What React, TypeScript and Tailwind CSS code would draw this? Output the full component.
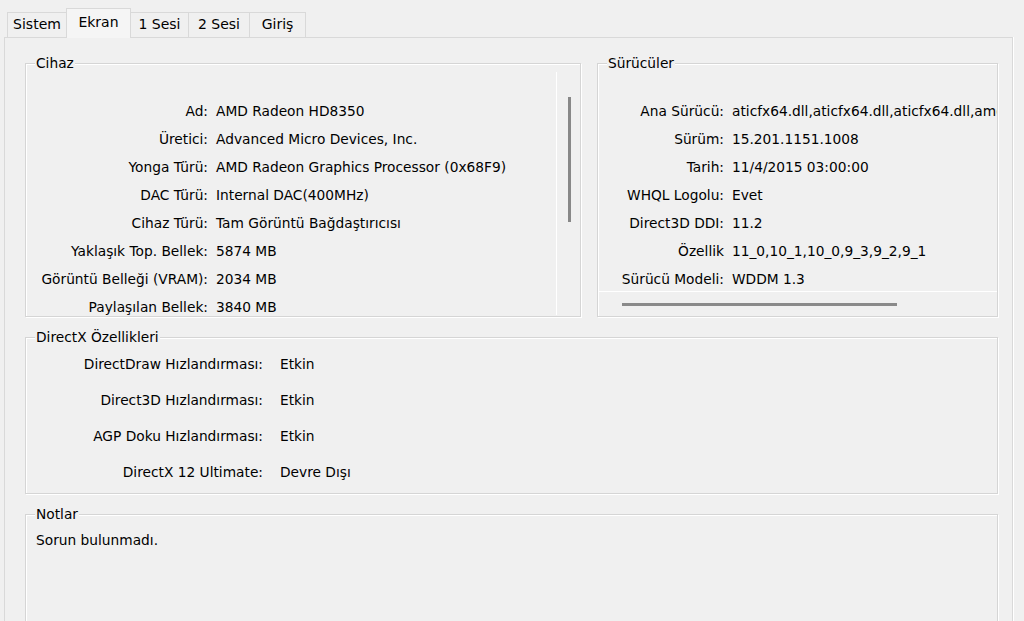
import type { ReactNode } from "react";

const device: [string, string][] = [
  ["Ad:", "AMD Radeon HD8350"],
  ["Üretici:", "Advanced Micro Devices, Inc."],
  ["Yonga Türü:", "AMD Radeon Graphics Processor (0x68F9)"],
  ["DAC Türü:", "Internal DAC(400MHz)"],
  ["Cihaz Türü:", "Tam Görüntü Bağdaştırıcısı"],
  ["Yaklaşık Top. Bellek:", "5874 MB"],
  ["Görüntü Belleği (VRAM):", "2034 MB"],
  ["Paylaşılan Bellek:", "3840 MB"],
];

const drivers: [string, string][] = [
  ["Ana Sürücü:", "aticfx64.dll,aticfx64.dll,aticfx64.dll,amdxc64.dll"],
  ["Sürüm:", "15.201.1151.1008"],
  ["Tarih:", "11/4/2015 03:00:00"],
  ["WHQL Logolu:", "Evet"],
  ["Direct3D DDI:", "11.2"],
  ["Özellik", "11_0,10_1,10_0,9_3,9_2,9_1"],
  ["Sürücü Modeli:", "WDDM 1.3"],
];

const features: [string, string][] = [
  ["DirectDraw Hızlandırması:", "Etkin"],
  ["Direct3D Hızlandırması:", "Etkin"],
  ["AGP Doku Hızlandırması:", "Etkin"],
  ["DirectX 12 Ultimate:", "Devre Dışı"],
];

const tabs = [
  { label: "Sistem", w: "w-[60px]" },
  { label: "Ekran", w: "w-[65px]", active: true },
  { label: "1 Sesi", w: "w-[59px]" },
  { label: "2 Sesi", w: "w-[62px]" },
  { label: "Giriş", w: "w-[57px]" },
];

// etched group box with its caption sitting on the top border
function GroupBox({ title, className, children }: { title: string; className: string; children?: ReactNode }) {
  return (
    <div className={`relative border border-[#d5d5d5] shadow-[inset_1px_1px_0_#fff,1px_1px_0_#fff] ${className}`}>
      <span className="absolute left-[9px] -top-[9px] z-10 px-[1px] leading-4 bg-[#f0f0f0]">{title}</span>
      {children}
    </div>
  );
}

export default function App() {
  return (
    <div className="w-[1024px] h-[621px] overflow-hidden bg-[#f0f0f0] text-black text-[13.75px] font-['DejaVu_Sans',sans-serif]">
      {/* tab strip */}
      <div className="flex items-end h-[37px] pl-[8px] text-[14px]">
        {tabs.map((t) =>
          t.active ? (
            <div
              key={t.label}
              className={`${t.w} h-[30px] -mb-px -ml-px relative z-10 flex justify-center pt-[5px] leading-4 border border-b-0 border-[#d9d9d9] bg-[#f5f5f5]`}
            >
              {t.label}
            </div>
          ) : (
            <div
              key={t.label}
              className={`${t.w} h-[25px] -ml-px flex items-center justify-center pb-[1px] border border-b-0 border-[#d9d9d9] bg-[#f0f0f0]`}
            >
              {t.label}
            </div>
          )
        )}
      </div>

      {/* tab page */}
      <div className="ml-[4px] w-[1009px] h-[600px] border border-[#d9d9d9] shadow-[1px_0_0_#fff] pt-[25px] pl-[20px]">
        <div className="flex">
          <GroupBox title="Cihaz" className="w-[556px] h-[254px] flex">
            <div className="w-[531px] h-[243px] mt-[8px] overflow-hidden border-r border-white pt-[25px]">
              {device.map(([k, v]) => (
                <div key={k} className="h-[28px] flex items-center whitespace-nowrap">
                  <span className="w-[182px] text-right">{k}</span>
                  <span className="pl-[8px]">{v}</span>
                </div>
              ))}
            </div>
            <div className="pt-[33px] pl-[11px]">
              <div className="w-[3px] h-[125px] bg-[#888]" />
            </div>
          </GroupBox>

          <GroupBox title="Sürücüler" className="ml-[16px] w-[401px] h-[254px]">
            <div className="h-[220px] mt-[8px] overflow-hidden border-b border-white pt-[25px]">
              {drivers.map(([k, v]) => (
                <div key={k} className="h-[28px] flex items-center whitespace-nowrap">
                  <span className="w-[126px] shrink-0 text-right">{k}</span>
                  <span className="pl-[8px]">{v}</span>
                </div>
              ))}
            </div>
            <div className="mt-[11px] ml-[24px] w-[275px] h-[3px] bg-[#8a8a8a]" />
          </GroupBox>
        </div>

        <GroupBox title="DirectX Özellikleri" className="mt-[20px] w-[973px] h-[157px] pt-[8px]">
          {features.map(([k, v]) => (
            <div key={k} className="h-[36px] flex items-center whitespace-nowrap">
              <span className="w-[237px] text-right">{k}</span>
              <span className="pl-[17px]">{v}</span>
            </div>
          ))}
        </GroupBox>

        <GroupBox title="Notlar" className="mt-[20px] w-[973px] h-[140px] pt-[17px] pl-[10px]">
          <div className="leading-4">Sorun bulunmadı.</div>
        </GroupBox>
      </div>
    </div>
  );
}
